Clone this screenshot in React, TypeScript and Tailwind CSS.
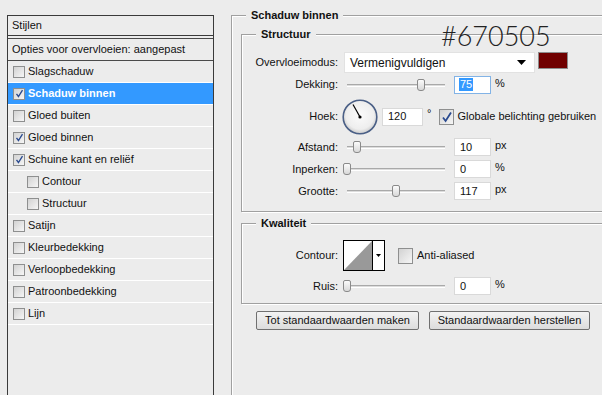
import React from 'react';

const font = "font-['Liberation_Sans','Arial',sans-serif]";

const CheckBox: React.FC<{ checked?: boolean; size?: 'sm' | 'md' }> = ({ checked, size = 'sm' }) => (
  <span
    className={`flex items-center justify-center shrink-0 border border-[#8e8f8f] bg-gradient-to-br from-[#d2d2d2] to-[#f6f6f6] ${
      size === 'sm' ? 'w-[12px] h-[12px]' : 'w-[15px] h-[16px]'
    }`}
  >
    {checked && (
      <svg viewBox="0 0 12 12" className={size === 'sm' ? 'w-[9px] h-[9px]' : 'w-[12px] h-[12px]'}>
        <path d="M2 6.5 L4.6 10 L10 1.5" fill="none" stroke="#2a4a8f" strokeWidth="1.8" />
      </svg>
    )}
  </span>
);

const Slider: React.FC<{ value: number }> = ({ value }) => (
  <div className="relative w-[98px] h-[14px] ml-[9px] shrink-0">
    <div className="absolute left-0 right-0 top-[6px] h-[3px] border-t border-[#a9a9a9] border-b border-b-white bg-[#dcdcdc]" />
    <div
      className="absolute top-[1px] w-[8px] h-[12px] rounded-t-[2px] rounded-b-[3px] border border-[#8a8a8a] bg-gradient-to-b from-[#fbfbfb] to-[#d8d8d8]"
      style={{ left: `${value * 0.98 - 4}px` }}
    />
  </div>
);

const NumBox: React.FC<{ value: string; unit: string; focused?: boolean }> = ({ value, unit, focused }) => (
  <>
    <div
      className={`ml-[9px] w-[37px] h-[18px] bg-white flex items-center pl-[4px] shrink-0 border ${
        focused ? 'border-[#82b3e6]' : 'border-[#d9d9d9]'
      }`}
    >
      {focused ? <span className="bg-[#3399ff] text-white px-[1px] leading-[13px]">{value}</span> : <span className="pl-[1px]">{value}</span>}
    </div>
    <span className="ml-[4px] -mt-[3px]">{unit}</span>
  </>
);

const Label: React.FC<{ children: React.ReactNode }> = ({ children }) => (
  <span className="w-[96px] text-right shrink-0">{children}</span>
);

const Group: React.FC<{ title: string; className?: string; children?: React.ReactNode }> = ({ title, className, children }) => (
  <div className={`relative border border-[#a0a0a0] shadow-[inset_1px_1px_0_#fff,1px_1px_0_#fff] ${className ?? ''}`}>
    <span className="absolute -top-[8px] left-[14px] px-[5px] bg-[#ececec] font-bold leading-[14px]">{title}</span>
    {children}
  </div>
);

const styles: { name: string; checked?: boolean; active?: boolean; sub?: boolean }[] = [
  { name: 'Slagschaduw' },
  { name: 'Schaduw binnen', checked: true, active: true },
  { name: 'Gloed buiten' },
  { name: 'Gloed binnen', checked: true },
  { name: 'Schuine kant en reliëf', checked: true },
  { name: 'Contour', sub: true },
  { name: 'Structuur', sub: true },
  { name: 'Satijn' },
  { name: 'Kleurbedekking' },
  { name: 'Verloopbedekking' },
  { name: 'Patroonbedekking' },
  { name: 'Lijn' },
];

export default function App() {
  return (
    <div className={`relative w-[602px] h-[395px] bg-[#ececec] flex overflow-hidden text-[11px] text-[#111] ${font}`}>
      {/* left: styles list */}
      <div className="pl-[7px] pt-[15px] w-[231px] shrink-0">
        <div className="w-[207px] h-[400px] border border-[#3a3a3a] bg-[#ececec]">
          <div className="h-[20px] flex items-center pl-[4px] border-b border-[#3a3a3a]">Stijlen</div>
          <div className="h-[23px] mt-[2px] flex items-center pl-[4px] border-t border-b border-[#4a4a4a]">
            Opties voor overvloeien: aangepast
          </div>
          {styles.map((s) => (
            <div
              key={s.name}
              className={`h-[22px] flex items-center gap-[3px] border-b border-white ${s.sub ? 'pl-[19px]' : 'pl-[5px]'} ${
                s.active ? 'bg-[#3399ff] text-white font-bold' : ''
              }`}
            >
              <CheckBox checked={s.checked} />
              <span>{s.name}</span>
            </div>
          ))}
        </div>
      </div>

      {/* right: settings */}
      <div className="pt-[15px] flex-1 min-w-0">
        <Group title="Schaduw binnen" className="w-[400px] h-[400px] border-r-0 border-b-0 pl-[9px] pt-[18px]">
          <Group title="Structuur" className="w-[380px] h-[178px] border-r-0 flex flex-col">
            <div className="flex items-start mt-[17px] h-[21px]">
              <span className="w-[96px] text-right shrink-0 self-center">Overvloeimodus:</span>
              <div className="ml-[6px] w-[191px] h-[21px] bg-white border border-[#e2e2e2] flex items-center justify-between pl-[5px] pr-[8px] text-[12px]">
                <span>Vermenigvuldigen</span>
                <svg width="9" height="5" viewBox="0 0 9 5">
                  <path d="M0 0 H9 L4.5 5 Z" fill="#000" />
                </svg>
              </div>
              <div className="ml-[3px] w-[30px] h-[17px] bg-[#700000] border border-[#8d8d8d]" />
            </div>
            <div className="flex items-center mt-[2px] h-[19px]">
              <Label>Dekking:</Label>
              <Slider value={75} />
              <NumBox value="75" unit="%" focused />
            </div>
            <div className="flex items-center mt-[5px] h-[35px]">
              <Label>Hoek:</Label>
              <svg width="36" height="36" viewBox="0 0 36 36" className="ml-[4px] shrink-0">
                <defs>
                  <radialGradient id="dial" cx="50%" cy="45%" r="55%">
                    <stop offset="0%" stopColor="#fbfbfb" />
                    <stop offset="75%" stopColor="#eeeeee" />
                    <stop offset="100%" stopColor="#c9c9c9" />
                  </radialGradient>
                </defs>
                <circle cx="18" cy="18" r="16.8" fill="url(#dial)" stroke="#4a5f86" strokeWidth="1.6" />
                <line x1="18" y1="18" x2="11" y2="5.5" stroke="#000" strokeWidth="1.2" />
                <circle cx="18" cy="18" r="1.6" fill="#000" />
              </svg>
              <div className="ml-[4px] w-[41px] h-[18px] bg-white border border-[#d9d9d9] flex items-center pl-[5px] shrink-0">120</div>
              <span className="ml-[4px] -mt-[6px]">°</span>
              <div className="ml-[8px] flex items-center gap-[3px]">
                <CheckBox checked size="md" />
                <span>Globale belichting gebruiken</span>
              </div>
            </div>
            <div className="flex items-center mt-[4px] h-[18px]">
              <Label>Afstand:</Label>
              <Slider value={10} />
              <NumBox value="10" unit="px" />
            </div>
            <div className="flex items-center mt-[4px] h-[18px]">
              <Label>Inperken:</Label>
              <Slider value={0} />
              <NumBox value="0" unit="%" />
            </div>
            <div className="flex items-center mt-[4px] h-[18px]">
              <Label>Grootte:</Label>
              <Slider value={50} />
              <NumBox value="117" unit="px" />
            </div>
          </Group>

          <Group title="Kwaliteit" className="w-[380px] h-[81px] mt-[11px] border-r-0 flex flex-col">
            <div className="flex items-center mt-[16px] h-[31px]">
              <Label>Contour:</Label>
              <div className="ml-[5px] w-[42px] h-[31px] border border-black bg-white flex shrink-0">
                <svg width="28" height="29" viewBox="0 0 28 29" className="shrink-0">
                  <path d="M0 29 L28 0 L28 29 Z" fill="#999" />
                </svg>
                <div className="flex-1 border-l border-black flex items-center justify-center">
                  <svg width="5" height="3" viewBox="0 0 5 3">
                    <path d="M0 0 H5 L2.5 3 Z" fill="#000" />
                  </svg>
                </div>
              </div>
              <div className="ml-[13px] flex items-center gap-[4px]">
                <CheckBox size="md" />
                <span>Anti-aliased</span>
              </div>
            </div>
            <div className="flex items-center mt-[6px] h-[18px]">
              <Label>Ruis:</Label>
              <Slider value={0} />
              <NumBox value="0" unit="%" />
            </div>
          </Group>

          <div className="flex mt-[7px] ml-[15px] gap-[10px]">
            <button className="w-[163px] h-[19px] rounded-[2px] border border-[#707070] bg-gradient-to-b from-[#f3f3f3] to-[#dcdcdc] text-[#111]">
              Tot standaardwaarden maken
            </button>
            <button className="w-[161px] h-[19px] rounded-[2px] border border-[#707070] bg-gradient-to-b from-[#f3f3f3] to-[#dcdcdc] text-[#111]">
              Standaardwaarden herstellen
            </button>
          </div>
        </Group>
      </div>

      {/* annotation overlaid on the dialog */}
      <span className="absolute left-[441px] top-[22px] text-[27px] leading-[28px] font-light text-[#222] font-['Lato','DejaVu_Sans',sans-serif]">
        #670505
      </span>
    </div>
  );
}
